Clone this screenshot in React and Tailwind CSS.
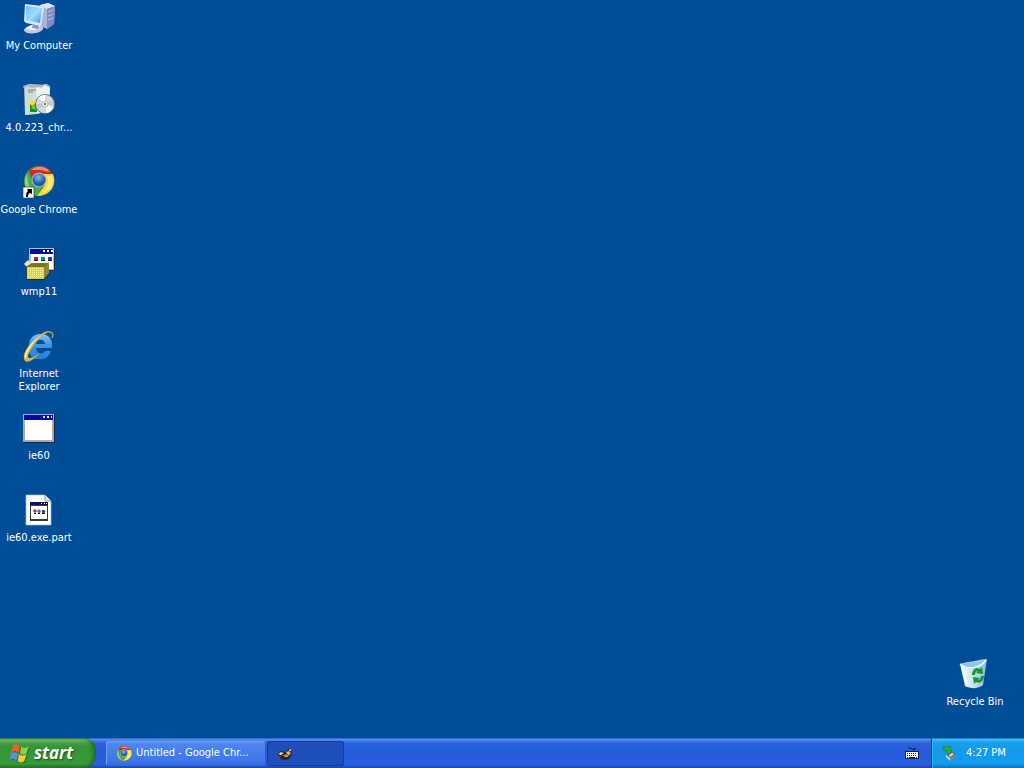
import React from "react";

function ComputerIcon() {
  return (
    <svg viewBox="0 0 32 32" className="size-8" aria-hidden="true">
      <defs>
        <linearGradient id="screen" x1="0" y1="0" x2="1" y2="1">
          <stop offset="0" stopColor="#4fb0f4" />
          <stop offset="0.5" stopColor="#9fe0ff" />
          <stop offset="1" stopColor="#3d96ea" />
        </linearGradient>
      </defs>
      <path d="M17 3 25 1 32 4 31 22 24 27 18 24Z" fill="#aab5db" />
      <path d="M17 3 25 1 32 4 24 7Z" fill="#dfe4f5" />
      <path d="M24 7 32 4 31 22 24 27Z" fill="#7e8cc2" />
      <path d="M25 10l5-2M25 14l5-2M25 18l5-2" stroke="#b9c3e6" />
      <path d="M1 28c2-5 13-7 18-4 3 2 0 6-6 7-6 1-12 0-12-3Z" fill="#c3c8e2" />
      <path d="M3 27c3-4 10-5 14-3l-5 4Z" fill="#fafbff" />
      <path d="m10 21 6 2-1 4-6-1Z" fill="#8996c4" />
      <path d="m2 2 18 2 1 2-3 18-15-3-2-2Z" fill="#d6e6f8" />
      <path d="m3 4 16 2-2 15-14-3Z" fill="url(#screen)" />
      <path d="m3 4 10 1L3 15Z" fill="#fff" opacity=".15" />
    </svg>
  );
}

function InstallerIcon() {
  return (
    <svg viewBox="0 0 32 32" className="size-8" aria-hidden="true">
      <path d="m1 2 5-2 19 1 2 3v24L2 31Z" fill="#b9c7c4" />
      <path d="m2 2 11 2 1 26-12 1Z" fill="#cfdbd9" />
      <path d="m13 4 11-4 3 3-2 23-11 4Z" fill="#eef1ef" />
      <path d="M0 3 5 1l4 2 4-2 5 2 4-3 5 3" fill="none" stroke="#a5b3b8" strokeWidth="1.5" />
      <path d="M5 6h8M5 8h5" stroke="#768687" />
      <path d="M7 19h7v9H7Z" fill="#1f8a20" />
      <path d="m7 16 5 1v3l-3 2-2-2Z" fill="#f3df37" />
      <path d="m8 24 3-4 2 6Z" fill="#54d83c" />
      <circle cx="22" cy="20" r="10" fill="#5e686b" />
      <circle cx="22" cy="20" r="9.2" fill="#d7dad9" />
      <path d="M22 20 15 14a9 9 0 0 1 7-3ZM22 20l8 4a9 9 0 0 1-6 5Z" fill="#fff" />
      <path d="m22 20 8-4a9 9 0 0 1 1 5ZM22 20l-7 5a9 9 0 0 1-2-5Z" fill="#c2c9c8" />
      <circle cx="22" cy="20" r="3" fill="#eff2f1" stroke="#a1a8a8" strokeWidth=".7" />
      <circle cx="22" cy="20" r="1.2" fill="#527c9c" />
    </svg>
  );
}

function ChromeMark({ id }) {
  return (
    <>
      <defs>
        <radialGradient id={id} cx=".45" cy=".3">
          <stop stopColor="#86b9e2" />
          <stop offset="1" stopColor="#1c5caa" />
        </radialGradient>
      </defs>
      <circle cx="16" cy="15" r="15" fill="#35a142" />
      <path d="M6 5C12-2 26-2 30 10L17 9l-7 6Z" fill="#cf2b21" />
      <path d="M8 4C14-1 23 0 27 6L17 4Z" fill="#f0887a" />
      <path d="M17 8h13c5 13-5 22-16 22l8-11Z" fill="#fbd43c" />
      <path d="M24 10h5c3 10-4 16-10 17 6-5 8-11 5-17Z" fill="#ffec79" />
      <path d="m5 6 5 13 8 3-4 8C4 29-2 16 5 6Z" fill="#4dac50" />
      <path d="M4 8c0 8 3 15 8 20C3 26-1 16 4 8Z" fill="#a5d98e" opacity=".8" />
      <circle cx="16" cy="14" r="7.5" fill="#a9bbc8" />
      <circle cx="16" cy="14" r="6.5" fill={`url(#${id})`} />
    </>
  );
}

function ChromeShortcutIcon() {
  return (
    <svg viewBox="0 0 32 32" className="size-8" aria-hidden="true">
      <ChromeMark id="chromeDesktop" />
      <path d="M0 21h11v11H0Z" fill="#fff" stroke="#222" strokeWidth=".6" />
      <path d="M4 23h5v5l-2-1c-2 1-2 2-2 4H3c0-3 0-4 2-6Z" fill="#000" />
    </svg>
  );
}

function PackageIcon() {
  return (
    <svg viewBox="0 0 32 32" className="size-8" aria-hidden="true">
      <path d="M6 0h26v23H6Z" fill="#252a36" />
      <path d="M6 0h25v22H6Z" fill="#b8becb" />
      <path d="M8 2h22v19H8Z" fill="#fff" />
      <path d="M7 1h23v5H7Z" fill="#080f91" />
      <path d="M20 2h2v2h-2ZM24 2h2v2h-2ZM28 2h2v2h-2Z" fill="#fff" />
      <path d="M11 9h4v4h-4Z" fill="#a72936" /><path d="M18 9h4v4h-4Z" fill="#1a8490" /><path d="M25 9h4v4h-4Z" fill="#263eb7" />
      <path d="M11 12.5h4M18 12.5h4M25 12.5h4" stroke="#222" />
      <path d="m1 16 4-4 4 4-4 4Z" fill="#e5e3cf" />
      <path d="m3 19 6-4h17l-4 5v10l-4 1H4Z" fill="#4c491d" />
      <path d="M4 19h17v12H4Z" fill="#d8d14b" />
      <path d="m4 19 5-4h17l-5 4Z" fill="#77722d" />
      <path d="m21 19 5-5v11l-5 6Z" fill="#8d8831" />
      <path d="M5 20.5h15M5 22.5h15M5 24.5h15M5 26.5h15M5 28.5h15" stroke="#f8f3a0" strokeDasharray="1 1" />
      <path d="M3 31.5h18l6-6" fill="none" stroke="#282813" />
    </svg>
  );
}

function ExplorerIcon() {
  return (
    <svg viewBox="0 0 32 32" className="size-8" aria-hidden="true">
      <defs>
        <linearGradient id="blueE" x1="0" y1="0" x2="0" y2="1">
          <stop stopColor="#7cc7f7" />
          <stop offset=".45" stopColor="#3e94df" />
          <stop offset="1" stopColor="#2b7fd2" />
        </linearGradient>
      </defs>
      <path d="M29 8c3-6-3-8-10-4" fill="none" stroke="#a99d59" strokeWidth="1.5" />
      <path fillRule="evenodd" d="M6 18C5 8 11 4 18 4c8 0 12 6 11 14H13c0 6 7 7 9 3h6c-2 6-6 9-12 8C9 30 6 25 6 18Zm7-4h9c0-5-8-6-9 0Z" fill="url(#blueE)" />
      <path d="M10 16C6 23 3 28 7 28c3 0 7-3 10-5C9 32 2 34 1 29-1 20 14 4 27 1 21 4 14 9 10 16Z" fill="#dfb64a" />
      <path d="M2 28C1 20 11 9 20 4 13 9 4 19 3 28Z" fill="#fff1a5" />
    </svg>
  );
}

function WindowIcon() {
  return (
    <svg viewBox="0 0 32 32" className="size-8" aria-hidden="true" shapeRendering="crispEdges">
      <path d="M0 2h32v29H0Z" fill="#202330" />
      <path d="M0 2h31v28H0Z" fill="#aaa9b7" />
      <path d="M2 4h27v24H2Z" fill="#fff" />
      <path d="M1 3h29v5H1Z" fill="#080a9b" />
      <path d="M20 4h2v2h-2ZM24 4h2v2h-2ZM28 4h1v2h-1Z" fill="#e5e5ef" />
    </svg>
  );
}

function DocumentIcon() {
  return (
    <svg viewBox="0 0 32 32" className="size-8" aria-hidden="true">
      <path d="M3 1h19l6 6v24H3Z" fill="#fff" stroke="#aab7c2" strokeWidth=".7" />
      <path d="M22 1v6h6" fill="#dfe6ef" stroke="#8b98a7" />
      <path d="M7 9h18v18H7Z" fill="#36393e" />
      <path d="M8 12h16v13H8Z" fill="#fff" />
      <path d="M7 8h18v3H7Z" fill="#101468" />
      <path d="M18 9.5h1m2 0h1m1 0h1" stroke="#fff" />
      <circle cx="12" cy="17" r="1.8" fill="#a43b45" />
      <path d="m16 15 2 2-2 3-2-3Z" fill="#3c8495" />
      <circle cx="20.500" cy="17.500" r="1.8" fill="#38458f" />
      <path d="M11 19.5h2m2 0h2m2 0h3" stroke="#222" />
    </svg>
  );
}

function RecycleIcon() {
  return (
    <svg viewBox="0 0 32 32" className="size-8" aria-hidden="true">
      <defs>
        <linearGradient id="bin">
          <stop stopColor="#f4ffff" />
          <stop offset=".5" stopColor="#c4e2f3" />
          <stop offset="1" stopColor="#86b8df" />
        </linearGradient>
      </defs>
      <path d="m1 6 8-2c7 0 11-3 19-3l-4 26c-5 4-12 4-18 1Z" fill="url(#bin)" />
      <path d="m2 6 7-2c8 1 13-1 18-2l-2 6c-5 4-17 4-23-2Z" fill="#8ec5e8" />
      <path d="M1 6c7 6 20 5 26-4" fill="none" stroke="#e8faff" strokeWidth="1.5" />
      <path d="m5 11 3 15" stroke="#fff" strokeWidth="2" opacity=".7" />
      <path d="M13 17c0-5 4-8 8-6l2-2 1 7-7-1 2-2c-2 0-3 2-3 4Z" fill="#1c922c" />
      <path d="M25 18c0 5-4 8-8 6l-2 2-1-7 7 1-2 2c2 0 3-2 3-4Z" fill="#1c922c" />
    </svg>
  );
}

function FlagIcon() {
  return (
    <svg viewBox="0 0 18 18" className="size-5 shrink-0" aria-hidden="true">
      <g fill="#1c5a25" opacity=".6">
        <path d="M4 3c2-2 4-1 6 1l-1 6C7 8 5 8 2 9Z" />
        <path d="M11 4c2 2 4 2 7 0l-2 6c-2 2-4 2-6 0Z" />
        <path d="M2 10c2-1 4-1 6 1l-1 6c-2-2-4-2-6-1Z" />
        <path d="M9 11c2 2 4 2 7 0l-2 6c-2 2-4 2-6 0Z" />
      </g>
      <path d="M3 2c2-2 4-1 6 1L8 9C6 7 4 7 1 8Z" fill="#e9602c" />
      <path d="M10 3c2 2 4 2 7 0l-2 6c-2 2-4 2-6 0Z" fill="#8fd044" />
      <path d="M1 9c2-1 4-1 6 1l-1 6c-2-2-4-2-6-1Z" fill="#5a8fe8" />
      <path d="M8 10c2 2 4 2 7 0l-2 6c-2 2-4 2-6 0Z" fill="#f7cb35" />
    </svg>
  );
}

function BirdIcon() {
  return (
    <svg viewBox="0 0 16 16" className="size-4" aria-hidden="true">
      <path d="M0 8 4 5l5 1 3-4 2 1v3l1 3-3 4-4 1-5-1 1-2Z" fill="#2c241e" />
      <path d="m1 8 3-2 3 1-3 2ZM9 6l3-1 2 3-3 1Z" fill="#e8b979" />
      <path d="m5 10 4-2 4 1-3 2-5-1Z" fill="#b78042" />
      <path d="m3 7 2 1-2 1ZM7 11l4-1-1 1ZM13 2l1 3h-2Z" fill="#fff0d0" />
    </svg>
  );
}

function KeyboardIcon() {
  return (
    <svg viewBox="0 0 16 16" className="size-4" aria-hidden="true" shapeRendering="crispEdges">
      <path d="M4 2h2v1h2v1h2V3h2v1h-1v1H8V4H6V3H4Z" fill="#142450" />
      <path d="M1 6h14v8H1Z" fill="#15214d" />
      <path d="M2 7h12v6H2Z" fill="#f5f5f5" />
      <path d="M3 8.5h10M3 10.5h10" stroke="#222" strokeDasharray="1 1" />
      <path d="M3 12.5h1m1 0h6m1 0h1" stroke="#222" />
    </svg>
  );
}

function DeviceIcon() {
  return (
    <svg viewBox="0 0 16 16" className="size-4" aria-hidden="true">
      <path d="m4 10 6-4 4 3-7 5Z" fill="#5e717b" />
      <path d="m4 10 4 3v3l-4-4Z" fill="#cad7dc" />
      <path d="m8 13 6-4v3l-6 4Z" fill="#75878d" />
      <path d="m7 10 3-2 2 1-4 3Z" fill="#d3dde0" />
      <path d="m1 2 8-1-1 2 2 4-3 2-3-4-2 1Z" fill="#2fab3d" stroke="#187c2e" strokeWidth=".6" />
    </svg>
  );
}

function DesktopItem({ icon: Icon, label }) {
  return (
    <button className="flex min-h-[82px] w-[78px] flex-col items-center gap-[5px] pt-0.5 text-white">
      <Icon />
      <span className="text-center text-[11px] leading-[13px]">{label}</span>
    </button>
  );
}

const items = [
  { icon: ComputerIcon, label: "My Computer" },
  { icon: InstallerIcon, label: "4.0.223_chr..." },
  { icon: ChromeShortcutIcon, label: "Google Chrome" },
  { icon: PackageIcon, label: "wmp11" },
  { icon: ExplorerIcon, label: <>Internet<br />Explorer</> },
  { icon: WindowIcon, label: "ie60" },
  { icon: DocumentIcon, label: "ie60.exe.part" },
];

export default function App() {
  return (
    <div className="flex min-h-screen flex-col bg-[#004e98] font-['DejaVu_Sans_Condensed',Roboto,sans-serif]">
      <main className="flex flex-1 justify-between pr-2.5">
        <div className="flex flex-col">
          {items.map((item, index) => <DesktopItem key={index} {...item} />)}
        </div>
        <div className="flex items-end">
          <DesktopItem icon={RecycleIcon} label="Recycle Bin" />
        </div>
      </main>

      <footer className="flex h-[30px] items-stretch bg-[linear-gradient(180deg,#1f50b2_0%,#5490ef_4%,#4584ed_8%,#2a62dc_18%,#245bdb_40%,#275fdf_88%,#1a45ac_100%)] text-[11px] text-white">
        <button className="flex w-24 shrink-0 items-center gap-1 rounded-r-xl bg-[linear-gradient(180deg,#26732a_0%,#74b874_6%,#45a145_16%,#359437_30%,#379b38_85%,#26732a_100%)] pl-2.5 shadow-[inset_-4px_0_5px_-2px_#195d22]">
          <FlagIcon />
          <span className="font-['Open_Sans',sans-serif] text-[17px] leading-5 font-bold italic [text-shadow:1px_1px_2px_#174c1a]">start</span>
        </button>
        <nav className="flex flex-1 gap-0.5 pt-[3px] pb-0.5 pl-2.5">
          <button className="flex w-[159px] items-center gap-1 rounded-[3px] bg-[linear-gradient(180deg,#6295f2_0%,#4c84ef_15%,#3d76eb_80%,#3267d6_100%)] pl-2.5 shadow-[inset_1px_1px_0_#6d9df5]">
            <svg viewBox="0 0 32 32" className="size-4 shrink-0" aria-hidden="true"><ChromeMark id="chromeTask" /></svg>
            <span className="whitespace-nowrap">Untitled - Google Chr...</span>
          </button>
          <button aria-label="Pidgin" className="flex w-[77px] items-center rounded-[3px] bg-[#1e4fbb] pl-2.5 shadow-[inset_1px_1px_1px_#163d92,inset_-1px_-1px_0_#163d92]">
            <BirdIcon />
          </button>
        </nav>
        <button aria-label="Keyboard" className="flex w-[27px] items-center">
          <KeyboardIcon />
        </button>
        <div className="flex w-[93px] shrink-0 items-center gap-2 border-l border-[#123b93] bg-[linear-gradient(180deg,#1268b4_0%,#38bdf4_5%,#1b9eec_15%,#129bea_40%,#149cec_85%,#0c70bf_100%)] pl-2.5 shadow-[inset_1px_0_0_#28b9f5]">
          <DeviceIcon />
          <time className="whitespace-nowrap">4:27 PM</time>
        </div>
      </footer>
    </div>
  );
}
